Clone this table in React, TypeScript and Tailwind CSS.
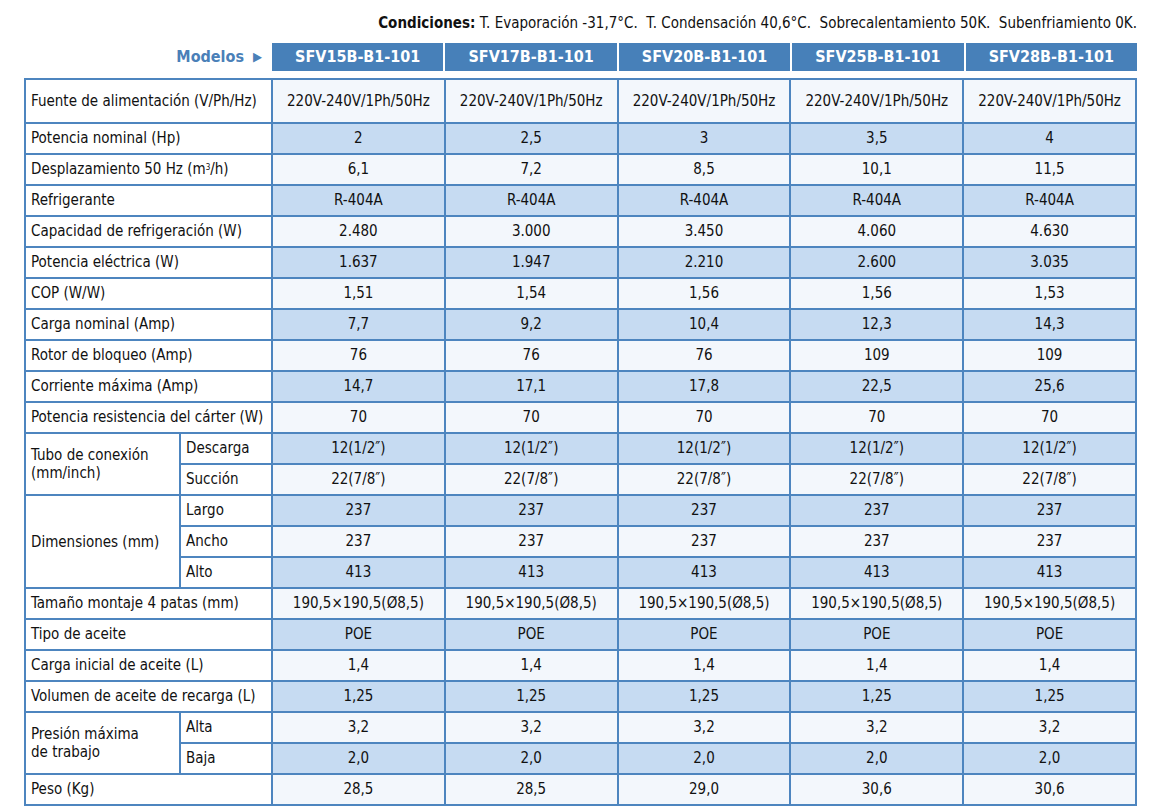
import React from "react";

const models = ["SFV15B-B1-101", "SFV17B-B1-101", "SFV20B-B1-101", "SFV25B-B1-101", "SFV28B-B1-101"];

type Row = {
  label?: React.ReactNode;
  group?: string;
  span?: number;
  sub?: string;
  values: string[];
};

const same = (v: string) => [v, v, v, v, v];

const rows: Row[] = [
  { label: "Fuente de alimentación (V/Ph/Hz)", values: same("220V-240V/1Ph/50Hz") },
  { label: "Potencia nominal (Hp)", values: ["2", "2,5", "3", "3,5", "4"] },
  {
    label: (
      <>
        Desplazamiento 50 Hz (m<sup className="text-[8px]">3</sup>/h)
      </>
    ),
    values: ["6,1", "7,2", "8,5", "10,1", "11,5"],
  },
  { label: "Refrigerante", values: same("R-404A") },
  { label: "Capacidad de refrigeración (W)", values: ["2.480", "3.000", "3.450", "4.060", "4.630"] },
  { label: "Potencia eléctrica (W)", values: ["1.637", "1.947", "2.210", "2.600", "3.035"] },
  { label: "COP (W/W)", values: ["1,51", "1,54", "1,56", "1,56", "1,53"] },
  { label: "Carga nominal (Amp)", values: ["7,7", "9,2", "10,4", "12,3", "14,3"] },
  { label: "Rotor de bloqueo (Amp)", values: ["76", "76", "76", "109", "109"] },
  { label: "Corriente máxima (Amp)", values: ["14,7", "17,1", "17,8", "22,5", "25,6"] },
  { label: "Potencia resistencia del cárter (W)", values: same("70") },
  { group: "Tubo de conexión\n(mm/inch)", span: 2, sub: "Descarga", values: same("12(1/2″)") },
  { sub: "Succión", values: same("22(7/8″)") },
  { group: "Dimensiones (mm)", span: 3, sub: "Largo", values: same("237") },
  { sub: "Ancho", values: same("237") },
  { sub: "Alto", values: same("413") },
  { label: "Tamaño montaje 4 patas (mm)", values: same("190,5×190,5(Ø8,5)") },
  { label: "Tipo de aceite", values: same("POE") },
  { label: "Carga inicial de aceite (L)", values: same("1,4") },
  { label: "Volumen de aceite de recarga (L)", values: same("1,25") },
  { group: "Presión máxima\nde trabajo", span: 2, sub: "Alta", values: same("3,2") },
  { sub: "Baja", values: same("2,0") },
  { label: "Peso (Kg)", values: ["28,5", "28,5", "29,0", "30,6", "30,6"] },
];

const cell = "border-2 border-[#4d85bf] px-[5px]";

export default function App() {
  return (
    <div className="w-[1171px] h-[812px] bg-white text-[#111] font-['DejaVu_Sans_Condensed','DejaVu_Sans',sans-serif] text-[15px]">
      <div className="flex justify-end pr-[34px] pt-[13px] h-[43px] text-[15px] leading-[20px]">
        <span>
          <b>Condiciones:</b> T. Evaporación -31,7°C.&nbsp; T. Condensación 40,6°C.&nbsp; Sobrecalentamiento 50K.&nbsp; Subenfriamiento 0K.
        </span>
      </div>
      <div className="flex h-[28px] ml-[24px] w-[1113px]">
        <div className="w-[248px] shrink-0 flex items-center justify-end pr-[10px] text-[#4a80b8] font-bold text-[16px]">
          Modelos <span className="ml-[9px] text-[13px]">▶</span>
        </div>
        {models.map((m, i) => (
          <div
            key={m}
            className={`flex-1 flex items-center justify-center bg-[#4780b9] text-white font-bold text-[16px] ${i < 4 ? "mr-[2px]" : ""}`}
          >
            {m}
          </div>
        ))}
      </div>
      <table className="ml-[24px] mt-[7px] w-[1113px] border-collapse table-fixed">
        <colgroup>
          <col className="w-[155px]" />
          <col className="w-[92px]" />
          <col />
          <col />
          <col />
          <col />
          <col />
        </colgroup>
        <tbody>
          {rows.map((r, i) => {
            const bg = i % 2 === 0 ? "bg-[#f3f7fc]" : "bg-[#c6dbf2]";
            return (
              <tr key={i} className={i === 0 ? "h-[44px]" : "h-[31px]"}>
                {r.label !== undefined && (
                  <td colSpan={2} className={`${cell} bg-white whitespace-nowrap`}>
                    {r.label}
                  </td>
                )}
                {r.group !== undefined && (
                  <td rowSpan={r.span} className={`${cell} bg-white whitespace-pre-line leading-[18px]`}>
                    {r.group}
                  </td>
                )}
                {r.sub !== undefined && <td className={`${cell} bg-white`}>{r.sub}</td>}
                {r.values.map((v, j) => (
                  <td key={j} className={`${cell} ${bg} text-center whitespace-nowrap`}>
                    {v}
                  </td>
                ))}
              </tr>
            );
          })}
        </tbody>
      </table>
    </div>
  );
}
